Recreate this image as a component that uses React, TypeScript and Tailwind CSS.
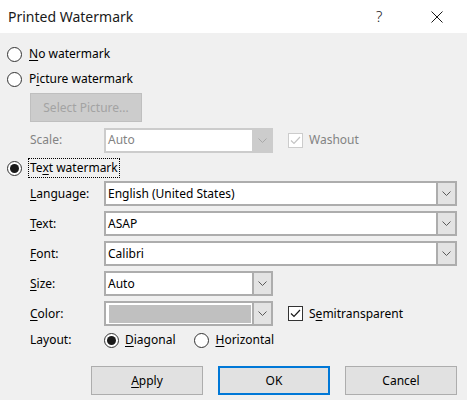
import React from 'react';

const font = { fontFamily: '"Noto Sans", "Segoe UI", sans-serif' };

const U = ({ children }: { children: React.ReactNode }) => <span className="underline underline-offset-2">{children}</span>;

const Radio = ({ checked }: { checked?: boolean }) => (
  <span className="w-[15px] h-[15px] rounded-full border border-[#333333] bg-white flex items-center justify-center shrink-0">
    {checked && <span className="w-[9px] h-[9px] rounded-full bg-[#1a1a1a]" />}
  </span>
);

const Check = ({ disabled }: { disabled?: boolean }) => (
  <span
    className={`w-[15px] h-[15px] border flex items-center justify-center shrink-0 bg-white ${
      disabled ? 'border-[#cccccc]' : 'border-[#333333]'
    }`}
  >
    <svg width="11" height="9" viewBox="0 0 11 9">
      <path d="M1 4.5 L4 7.5 L10 1" fill="none" stroke={disabled ? '#c4c4c4' : '#1a1a1a'} strokeWidth="1.2" />
    </svg>
  </span>
);

const Chevron = ({ color = '#5a5a5a' }: { color?: string }) => (
  <svg width="9" height="5" viewBox="0 0 9 5">
    <path d="M0.5 0.5 L4.5 4.5 L8.5 0.5" fill="none" stroke={color} strokeWidth="1" />
  </svg>
);

const Combo = ({
  children,
  width,
  disabled,
}: {
  children?: React.ReactNode;
  width: string;
  disabled?: boolean;
}) => (
  <div
    className={`h-[25px] ${width} flex border-2 ${disabled ? 'border-[#cccccc]' : 'border-[#adadad]'} bg-white`}
  >
    <div className={`flex-1 flex items-center pl-[2px] ${disabled ? 'text-[#838383]' : 'text-black'}`}>{children}</div>
    <div
      className={`w-[19px] flex items-center justify-center border-l-2 ${
        disabled ? 'bg-[#cccccc] border-[#cccccc]' : 'bg-[#e3e3e3] border-[#adadad]'
      }`}
    >
      <Chevron color={disabled ? '#a8a8a8' : '#5a5a5a'} />
    </div>
  </div>
);

const FieldRow = ({ label, children }: { label: React.ReactNode; children: React.ReactNode }) => (
  <div className="h-[25px] flex items-center">
    <span className="w-[74px] pl-[23px] box-content shrink-0">{label}</span>
    {children}
  </div>
);

const Button = ({ children, primary }: { children: React.ReactNode; primary?: boolean }) => (
  <button
    className={`w-[112px] h-[29px] bg-[#e1e1e1] flex items-center justify-center ${
      primary ? 'border-2 border-[#0078d7]' : 'border border-[#adadad]'
    }`}
  >
    {children}
  </button>
);

export default function App() {
  return (
    <div className="w-[467px] h-[400px] bg-[#f0f0f0] text-[12px] text-black leading-none" style={font}>
      {/* Title bar */}
      <div className="h-[33px] bg-white flex items-center">
        <span className="pl-[8px] text-[14px] text-[#1a1a1a] flex-1">Printed Watermark</span>
        <span className="text-[15px] text-[#1a1a1a] w-[20px] font-light">?</span>
        <span className="w-[46px] flex justify-center ml-[18px] mr-[7px]">
          <svg width="12" height="12" viewBox="0 0 12 12">
            <path d="M0.5 0.5 L11.5 11.5 M11.5 0.5 L0.5 11.5" stroke="#1a1a1a" strokeWidth="1" />
          </svg>
        </span>
      </div>

      <div className="flex flex-col pl-[7px] pr-[10px] pt-[11px]">
        <div className="h-[20px] flex items-center gap-[7px]">
          <Radio />
          <span>
            <U>N</U>o watermark
          </span>
        </div>
        <div className="h-[20px] mt-[5px] flex items-center gap-[7px]">
          <Radio />
          <span>
            P<U>i</U>cture watermark
          </span>
        </div>
        <div className="mt-[4px] ml-[23px] w-[112px] h-[29px] bg-[#cccccc] border border-[#bfbfbf] flex items-center justify-center text-[#a3a3a3]">
          Select Picture...
        </div>
        <div className="mt-[5px] h-[26px] flex items-center">
          <span className="w-[74px] pl-[23px] box-content shrink-0 text-[#838383]">Scale:</span>
          <Combo width="w-[169px]" disabled>
            Auto
          </Combo>
          <span className="ml-[15px] flex items-center gap-[6px] text-[#838383]">
            <Check disabled />
            Washout
          </span>
        </div>
        <div className="h-[20px] mt-[5px] flex items-center gap-[6px]">
          <Radio checked />
          <span className="border border-dotted border-black px-[1px] py-[3px]">
            Te<U>x</U>t watermark
          </span>
        </div>

        <div className="mt-[3px] flex flex-col gap-[5px]">
          <FieldRow label={<><U>L</U>anguage:</>}>
            <Combo width="w-[354px]">English (United States)</Combo>
          </FieldRow>
          <FieldRow label={<><U>T</U>ext:</>}>
            <Combo width="w-[354px]">ASAP</Combo>
          </FieldRow>
          <FieldRow label={<><U>F</U>ont:</>}>
            <Combo width="w-[354px]">Calibri</Combo>
          </FieldRow>
          <FieldRow label={<><U>S</U>ize:</>}>
            <Combo width="w-[169px]">Auto</Combo>
          </FieldRow>
          <FieldRow label={<><U>C</U>olor:</>}>
            <Combo width="w-[169px]">
              <span className="block w-[142px] h-[18px] bg-[#c0c0c0] ml-[1px]" />
            </Combo>
            <span className="ml-[15px] flex items-center gap-[6px]">
              <Check />
              <span>
                S<U>e</U>mitransparent
              </span>
            </span>
          </FieldRow>
        </div>

        <div className="h-[20px] mt-[4px] flex items-center">
          <span className="w-[74px] pl-[23px] box-content shrink-0">Layout:</span>
          <span className="flex items-center gap-[6px]">
            <Radio checked />
            <span>
              <U>D</U>iagonal
            </span>
          </span>
          <span className="ml-[19px] flex items-center gap-[6px]">
            <Radio />
            <span>
              <U>H</U>orizontal
            </span>
          </span>
        </div>

        <div className="mt-[16px] flex justify-end gap-[15px]">
          <Button>
            <U>A</U>pply
          </Button>
          <Button primary>OK</Button>
          <Button>Cancel</Button>
        </div>
      </div>
    </div>
  );
}
